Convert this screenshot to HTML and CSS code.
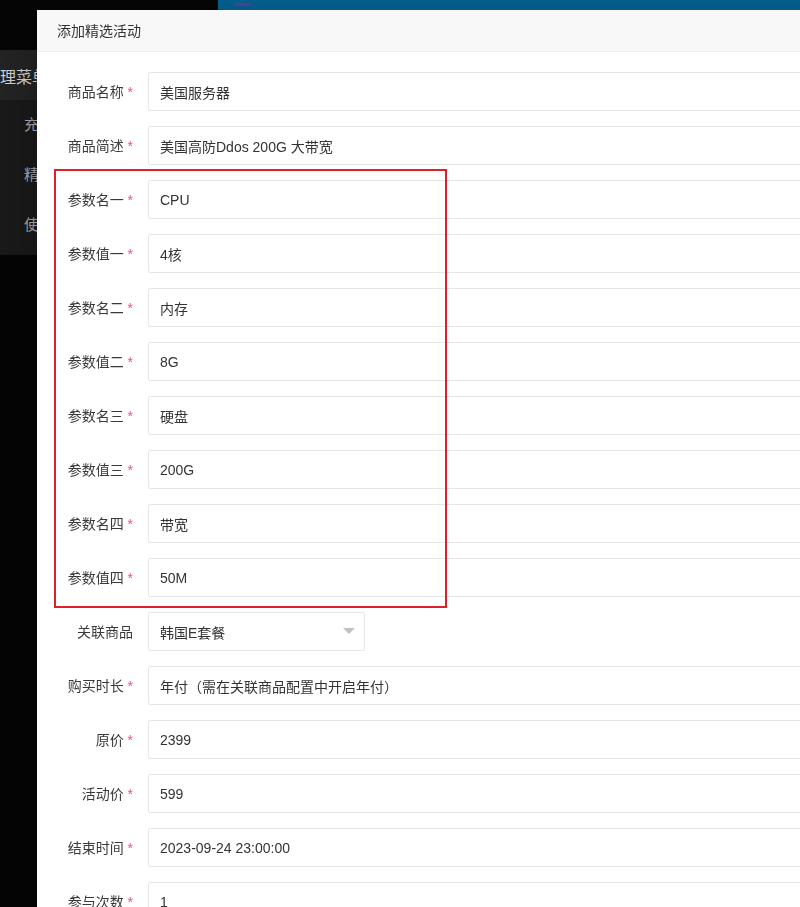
FILE: index.html
```html
<!DOCTYPE html>
<html lang="zh-CN">
<head>
  <meta charset="UTF-8">
  <meta name="viewport" content="width=device-width, initial-scale=1.0">
  <title>添加精选活动</title>
  <link rel="stylesheet" href="styles.css">
</head>
<body>
  <!-- 后台页面（被弹窗遮住） -->
  <div class="topbar">
    <div class="topbar-logo"></div>
    <div class="topbar-main"><span class="nav-mark"></span></div>
  </div>
  <div class="sidebar">
    <div class="sidebar-title">理菜单</div>
    <ul class="sidebar-menu">
      <li>充值管理</li>
      <li>精选活动</li>
      <li>使用说明</li>
    </ul>
  </div>

  <!-- 弹窗 -->
  <div class="layer">
    <div class="layer-title">添加精选活动</div>
    <form class="layer-form">
      <div class="form-item">
        <label class="form-label">商品名称 <span class="req">*</span></label>
        <div class="input-block"><input class="input" value="美国服务器"></div>
      </div>
      <div class="form-item">
        <label class="form-label">商品简述 <span class="req">*</span></label>
        <div class="input-block"><input class="input" value="美国高防Ddos 200G 大带宽"></div>
      </div>
      <div class="form-item">
        <label class="form-label">参数名一 <span class="req">*</span></label>
        <div class="input-block"><input class="input" value="CPU"></div>
      </div>
      <div class="form-item">
        <label class="form-label">参数值一 <span class="req">*</span></label>
        <div class="input-block"><input class="input" value="4核"></div>
      </div>
      <div class="form-item">
        <label class="form-label">参数名二 <span class="req">*</span></label>
        <div class="input-block"><input class="input" value="内存"></div>
      </div>
      <div class="form-item">
        <label class="form-label">参数值二 <span class="req">*</span></label>
        <div class="input-block"><input class="input" value="8G"></div>
      </div>
      <div class="form-item">
        <label class="form-label">参数名三 <span class="req">*</span></label>
        <div class="input-block"><input class="input" value="硬盘"></div>
      </div>
      <div class="form-item">
        <label class="form-label">参数值三 <span class="req">*</span></label>
        <div class="input-block"><input class="input" value="200G"></div>
      </div>
      <div class="form-item">
        <label class="form-label">参数名四 <span class="req">*</span></label>
        <div class="input-block"><input class="input" value="带宽"></div>
      </div>
      <div class="form-item">
        <label class="form-label">参数值四 <span class="req">*</span></label>
        <div class="input-block"><input class="input" value="50M"></div>
      </div>
      <div class="form-item">
        <label class="form-label">关联商品</label>
        <div class="input-inline select">
          <input class="input" value="韩国E套餐" readonly>
          <i class="edge"></i>
        </div>
      </div>
      <div class="form-item">
        <label class="form-label">购买时长 <span class="req">*</span></label>
        <div class="input-block"><input class="input" value="年付（需在关联商品配置中开启年付）"></div>
      </div>
      <div class="form-item">
        <label class="form-label">原价 <span class="req">*</span></label>
        <div class="input-block"><input class="input" value="2399"></div>
      </div>
      <div class="form-item">
        <label class="form-label">活动价 <span class="req">*</span></label>
        <div class="input-block"><input class="input" value="599"></div>
      </div>
      <div class="form-item">
        <label class="form-label">结束时间 <span class="req">*</span></label>
        <div class="input-block"><input class="input" value="2023-09-24 23:00:00"></div>
      </div>
      <div class="form-item">
        <label class="form-label">参与次数 <span class="req">*</span></label>
        <div class="input-block"><input class="input" value="1"></div>
      </div>
    </form>

    <!-- 标注框 -->
    <div class="mark-box"></div>
  </div>
</body>
</html>
```

FILE: styles.css
```css
* {
  box-sizing: border-box;
}

html, body {
  margin: 0;
  height: 100%;
  overflow: hidden;
}

body {
  background: #050505;
  font-family: 'Liberation Sans', 'Noto Sans CJK SC', sans-serif;
  font-size: 14px;
  color: #333;
}

.topbar {
  display: flex;
  height: 50px;
}

.topbar-logo {
  width: 218px;
  background: #060606;
}

.topbar-main {
  flex: 1;
  background: #05689b;
  padding: 3px 0 0 17px;
}

.nav-mark {
  display: block;
  width: 16px;
  height: 3px;
  background: #5b45a8;
}

.sidebar {
  width: 218px;
  background: #1a1a1a;
  color: #aaa;
}

.sidebar-title {
  height: 50px;
  line-height: 56px;
  background: #242424;
  color: #d4d4d4;
  font-size: 16px;
  white-space: nowrap;
}

.sidebar-menu {
  list-style: none;
  margin: 0;
  padding: 0 0 5px;
}

.sidebar-menu li {
  height: 50px;
  line-height: 50px;
  padding-left: 24px;
  font-size: 15px;
}

.layer {
  position: fixed;
  left: 37px;
  top: 10px;
  width: 820px;
  height: 960px;
  background: #fff;
  box-shadow: 1px 1px 50px rgba(0, 0, 0, 0.3);
}

.layer-title {
  height: 42px;
  line-height: 42px;
  padding: 0 80px 0 20px;
  background: #f8f8f8;
  border-bottom: 1px solid #eee;
  color: #333;
  font-size: 14px;
}

.layer-form {
  padding: 20px 0 0 1px;
}

.form-item {
  display: flex;
  align-items: center;
  height: 39px;
  margin-bottom: 15px;
}

.form-label {
  width: 110px;
  flex-shrink: 0;
  padding: 0 15px;
  text-align: right;
  line-height: 20px;
  color: #3a3a3a;
}

.req {
  color: #f0506e;
}

.input-block {
  flex: 1;
  height: 39px;
}

.input-inline {
  width: 217px;
  height: 39px;
}

.input {
  display: block;
  width: 100%;
  height: 39px;
  padding: 0 10px 0 11px;
  border: 1px solid #e6e6e6;
  border-radius: 2px;
  background: #fff;
  color: #333;
  font: inherit;
  font-size: 14px;
  outline: none;
}

.select {
  position: relative;
}

.edge {
  position: absolute;
  right: 10px;
  top: 16px;
  width: 0;
  height: 0;
  border-width: 6px;
  border-style: solid;
  border-color: #c2c2c2 transparent transparent;
}

.mark-box {
  position: absolute;
  left: 17px;
  top: 159px;
  width: 393px;
  height: 439px;
  border: 2px solid #df1f2a;
}
```
